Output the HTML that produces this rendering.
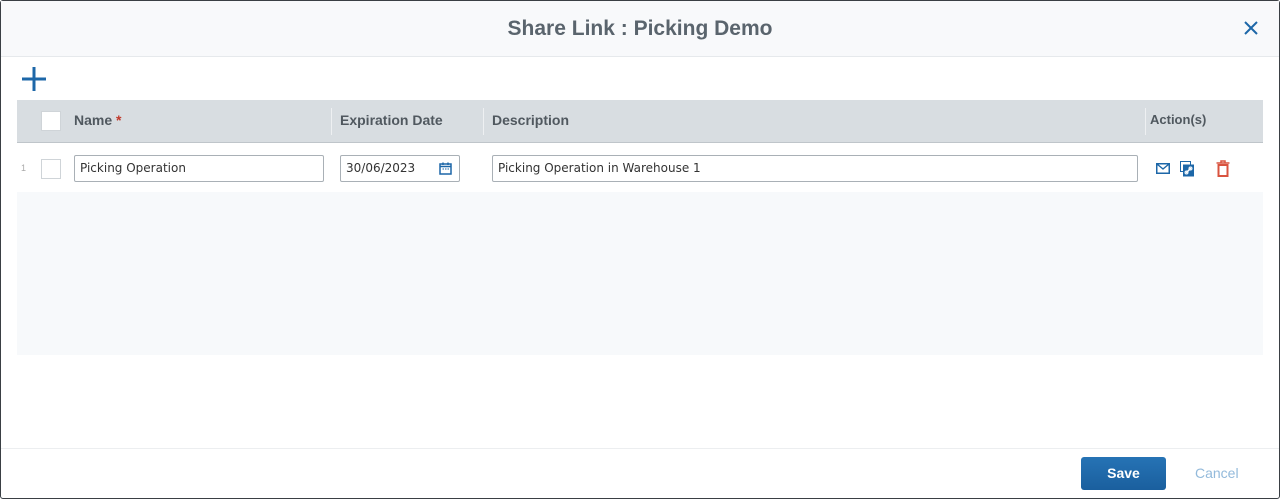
<!DOCTYPE html>
<html><head><meta charset="utf-8"><style>
*{box-sizing:border-box;margin:0;padding:0}
body{width:1280px;height:499px;background:#fff;font-family:"Liberation Sans",sans-serif;position:relative;overflow:hidden}
.frame{position:absolute;left:0;top:0;width:1280px;height:499px;border:1px solid #3a3f44;border-radius:3px;background:#fff}
.hdr{position:absolute;left:1px;top:1px;right:1px;height:56px;background:#f8f9fb;border-bottom:1px solid #e6e9ec;text-align:center;font-size:21px;font-weight:bold;color:#5a646d;line-height:56px}
.close{position:absolute;right:20px;top:19px}
.th{position:absolute;left:17px;top:100px;width:1246px;height:43px;background:#d8dde1;border-bottom:1px solid #bfc5ca}
.th span{position:absolute;top:12px;font-size:14px;font-weight:bold;color:#50585f}
.sep{position:absolute;top:8px;width:1px;height:27px;background:#eef0f2}
.cb{position:absolute;width:20px;height:20px;background:#fff;border:1px solid #cfd4d8}
.inp{position:absolute;top:155px;height:27px;border:1px solid #a9b0b6;border-radius:2px;font-family:"DejaVu Sans",sans-serif;font-size:12px;color:#333;padding-left:5px;line-height:25px}
.empty{position:absolute;left:17px;top:192px;width:1246px;height:163px;background:#f7f9fb}
.foot{position:absolute;left:1px;right:1px;top:448px;border-top:1px solid #eceef0}
.save{position:absolute;left:1081px;top:457px;width:85px;height:33px;background:linear-gradient(#2673b5,#1a5f9e);border-radius:3px;color:#fff;font-weight:bold;font-size:14px;text-align:center;line-height:33px}
.cancel{position:absolute;left:1195px;top:465px;color:#93badb;font-size:14px}
</style></head><body>
<div class="frame"></div>
<div class="hdr">Share Link : Picking Demo
<svg class="close" width="16" height="16" viewBox="0 0 16 16"><path d="M2 2L14 14M14 2L2 14" stroke="#1d67a8" stroke-width="2"/></svg></div>
<svg style="position:absolute;left:21px;top:66px" width="26" height="26" viewBox="0 0 26 26"><path d="M13 1V25M1 13H25" stroke="#1d67a8" stroke-width="3"/></svg>
<div class="th">
<div class="cb" style="left:24px;top:11px"></div>
<span style="left:57px">Name <span style="position:static;color:#c0392b">*</span></span>
<div class="sep" style="left:314px"></div>
<span style="left:323px">Expiration Date</span>
<div class="sep" style="left:466px"></div>
<span style="left:475px">Description</span>
<div class="sep" style="left:1128px"></div>
<span style="left:1133px;font-size:13px">Action(s)</span>
</div>
<div style="position:absolute;left:21px;top:163px;font-size:9px;color:#aaa">1</div>
<div class="cb" style="left:41px;top:159px"></div>
<div class="inp" style="left:74px;width:250px">Picking Operation</div>
<div class="inp" style="left:340px;width:120px">30/06/2023
<svg style="position:absolute;right:7px;top:6px" width="13" height="13" viewBox="0 0 13 13"><rect x="1" y="2" width="11" height="10" fill="none" stroke="#1d67a8" stroke-width="1.5"/><path d="M1 4.5H12M4 0.5V3M9 0.5V3" stroke="#1d67a8" stroke-width="1.5"/><path d="M3.5 7H5M6 7H7.5M8.5 7H10" stroke="#1d67a8"/></svg></div>
<div class="inp" style="left:492px;width:646px">Picking Operation in Warehouse 1</div>
<svg style="position:absolute;left:1156px;top:163px" width="14" height="11" viewBox="0 0 14 11"><rect x="0.75" y="0.75" width="12.5" height="9.5" fill="none" stroke="#1d67a8" stroke-width="1.5"/><path d="M1 1L7 6L13 1" fill="none" stroke="#1d67a8" stroke-width="1.4"/></svg>
<svg style="position:absolute;left:1180px;top:161px" width="15" height="16" viewBox="0 0 15 16"><rect x="0.5" y="0.5" width="10" height="10" fill="none" stroke="#1d67a8"/><rect x="3" y="3.5" width="11" height="12" fill="#1d67a8"/><path d="M6 12L11 7" stroke="#fff" stroke-width="1.5"/><circle cx="6.5" cy="11.5" r="1.5" fill="none" stroke="#fff"/><circle cx="10.5" cy="7.5" r="1.5" fill="none" stroke="#fff"/></svg>
<svg style="position:absolute;left:1216px;top:160px" width="14" height="17" viewBox="0 0 14 17"><path d="M0.5 3H13.5M5 3V1H9V3" fill="none" stroke="#d9533f" stroke-width="1.5"/><rect x="2.5" y="5" width="9" height="11" fill="none" stroke="#d9533f" stroke-width="2"/></svg>
<div class="empty"></div>
<div class="foot"></div>
<div class="save">Save</div>
<div class="cancel">Cancel</div>
</body></html>
